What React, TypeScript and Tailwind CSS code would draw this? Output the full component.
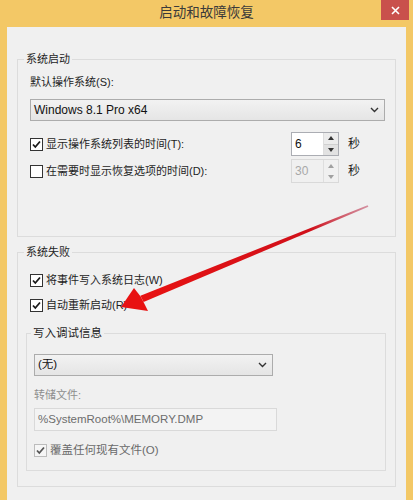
import React from "react";

const Check = ({ color = "#1a1a1a" }: { color?: string }) => (
  <svg width="11" height="11" viewBox="0 0 11 11">
    <path d="M2 5.5 L4.3 8 L9 2.5" fill="none" stroke={color} strokeWidth="1.8" />
  </svg>
);

const Box = ({ checked, disabled }: { checked?: boolean; disabled?: boolean }) => (
  <span
    className={
      disabled
        ? "w-[13px] h-[13px] border border-[#bcbcbc] bg-[#f6f6f6] flex items-center justify-center shrink-0"
        : "w-[13px] h-[13px] border border-[#333333] bg-white flex items-center justify-center shrink-0"
    }
  >
    {checked && <Check color={disabled ? "#555555" : "#1a1a1a"} />}
  </span>
);

const Chevron = () => (
  <svg width="9" height="6" viewBox="0 0 9 6">
    <path d="M1 1 L4.5 4.5 L8 1" fill="none" stroke="#333" strokeWidth="1.4" />
  </svg>
);

const Spinner = ({ value, disabled }: { value: string; disabled?: boolean }) => (
  <div
    className={
      disabled
        ? "w-[48px] h-[24px] border border-[#d9d9d9] bg-[#f0f0f0] flex"
        : "w-[48px] h-[24px] border border-[#abadb3] bg-white flex"
    }
  >
    <span
      className={
        disabled
          ? "flex-1 pl-[3px] text-[12px] leading-[22px] text-[#a8a8a8]"
          : "flex-1 pl-[3px] text-[12px] leading-[22px] text-[#111]"
      }
    >
      {value}
    </span>
    <div className="w-[15px] flex flex-col border-l border-[#dedede]">
      <div className={disabled ? "flex-1 bg-[#f0f0f0] flex items-center justify-center" : "flex-1 bg-[#ececec] flex items-center justify-center border-b border-[#d0d0d0]"}>
        <svg width="6" height="4" viewBox="0 0 6 4">
          <path d="M0 4 L3 0 L6 4 Z" fill={disabled ? "#a0a0a0" : "#333"} />
        </svg>
      </div>
      <div className={disabled ? "flex-1 bg-[#f0f0f0] flex items-center justify-center" : "flex-1 bg-[#e2e2e2] flex items-center justify-center"}>
        <svg width="6" height="4" viewBox="0 0 6 4">
          <path d="M0 0 L3 4 L6 0 Z" fill={disabled ? "#a0a0a0" : "#333"} />
        </svg>
      </div>
    </div>
  </div>
);

export default function App() {
  return (
    <div className="w-[413px] h-[500px] bg-[#f3c866] relative overflow-hidden flex flex-col font-['Liberation_Sans','Noto_Sans_CJK_SC',sans-serif] text-[11px] text-[#1e1e1e]">
      {/* title bar */}
      <div className="h-[27px] flex items-center justify-center relative shrink-0">
        <span className="text-[13.5px] text-[#3a3a3a] leading-[20px] -mt-[1px]">启动和故障恢复</span>
        <div className="absolute right-[4px] top-0 w-[28px] h-[20px] bg-[#c9504c] flex items-center justify-center">
          <svg width="9" height="9" viewBox="0 0 9 9">
            <path d="M1 1 L8 8 M8 1 L1 8" stroke="white" strokeWidth="1.6" />
          </svg>
        </div>
      </div>

      {/* client */}
      <div className="mx-[7px] flex-1 bg-[#f0f0f0] px-[10px] pt-[24px]">
        {/* 系统启动 */}
        <fieldset className="border border-[#dcdcdc]">
          <legend className="ml-[6px] px-[2px] leading-[16px]">系统启动</legend>
          <div className="pt-[7px] pl-[12px] pr-[10px] pb-[53px]">
            <div className="leading-[16px]">默认操作系统(S):</div>
            <div className="mt-[9px] h-[22px] border border-[#acacac] bg-gradient-to-b from-[#f2f2f2] to-[#e5e5e5] flex items-center justify-between pl-[3px] pr-[5px]">
              <span className="text-[12px] text-[#111]">Windows 8.1 Pro x64</span>
              <Chevron />
            </div>
            <div className="mt-[11px] h-[24px] flex items-center">
              <div className="flex-1 flex items-center gap-[3px]">
                <Box checked />
                <span className="leading-[16px]">显示操作系统列表的时间(T):</span>
              </div>
              <Spinner value="6" />
              <span className="ml-[9px] w-[37px] leading-[16px] text-[12px]">秒</span>
            </div>
            <div className="mt-[3px] h-[24px] flex items-center">
              <div className="flex-1 flex items-center gap-[3px]">
                <Box />
                <span className="leading-[16px]">在需要时显示恢复选项的时间(D):</span>
              </div>
              <Spinner value="30" disabled />
              <span className="ml-[9px] w-[37px] leading-[16px] text-[12px]">秒</span>
            </div>
          </div>
        </fieldset>

        {/* 系统失败 */}
        <fieldset className="mt-[7px] border border-[#dcdcdc]">
          <legend className="ml-[6px] px-[2px] leading-[16px]">系统失败</legend>
          <div className="pt-[12px] pl-[8px] pr-[9px] pb-[15px]">
            <div className="pl-[4px] h-[16px] flex items-center gap-[3px]">
              <Box checked />
              <span className="leading-[16px]">将事件写入系统日志(W)</span>
            </div>
            <div className="mt-[9px] pl-[4px] h-[16px] flex items-center gap-[3px]">
              <Box checked />
              <span className="leading-[16px]">自动重新启动(R)</span>
            </div>

            <fieldset className="mt-[12px] border border-[#dcdcdc]">
              <legend className="ml-[4px] px-[2px] leading-[16px] text-[11.5px]">写入调试信息</legend>
              <div className="pt-[13px] pl-[7px] pb-[12px]">
                <div className="w-[239px] h-[22px] border border-[#acacac] bg-gradient-to-b from-[#f2f2f2] to-[#e5e5e5] flex items-center justify-between pl-[3px] pr-[5px]">
                  <span className="text-[11.5px] text-[#111]">(无)</span>
                  <Chevron />
                </div>
                <div className="mt-[11px] leading-[16px] text-[#8e8e8e]">转储文件:</div>
                <div className="mt-[5px] w-[243px] h-[23px] border border-[#d9d9d9] bg-[#f3f3f3] flex items-center pl-[3px]">
                  <span className="text-[11.5px] text-[#6d6d6d]">%SystemRoot%\MEMORY.DMP</span>
                </div>
                <div className="mt-[11px] h-[16px] flex items-center gap-[3px]">
                  <Box checked disabled />
                  <span className="leading-[16px] text-[#6a6a6a] text-[11.5px]">覆盖任何现有文件(O)</span>
                </div>
              </div>
            </fieldset>
          </div>
        </fieldset>
      </div>

      {/* red arrow annotation */}
      <svg className="absolute inset-0 pointer-events-none" width="413" height="500" viewBox="0 0 413 500">
        <defs>
          <linearGradient id="ag" x1="368" y1="206" x2="140" y2="300" gradientUnits="userSpaceOnUse">
            <stop offset="0" stopColor="#c0506a" stopOpacity="0.6" />
            <stop offset="0.25" stopColor="#d0101a" />
            <stop offset="1" stopColor="#e81212" />
          </linearGradient>
        </defs>
        <polygon points="367.6,205.3 368.4,206.7 143.6,302 140.4,295.8" fill="url(#ag)" />
        <polygon points="121,307 134,288 141,297 148,311" fill="#e81212" />
      </svg>
    </div>
  );
}
